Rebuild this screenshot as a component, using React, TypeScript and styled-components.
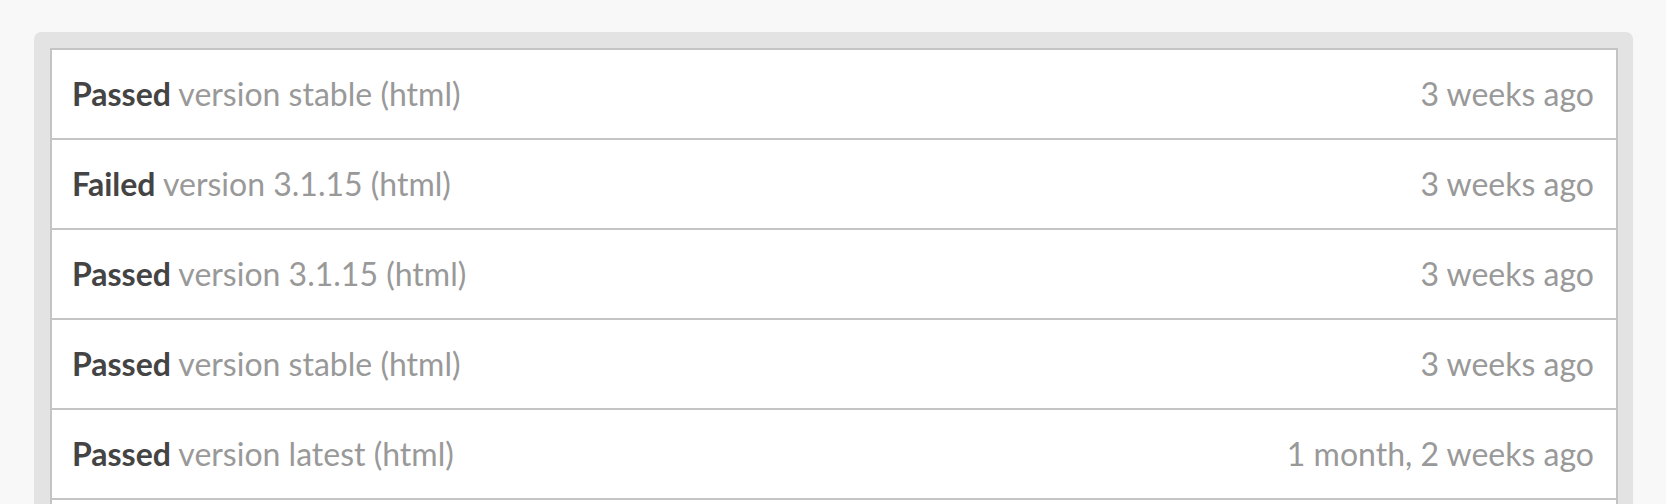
import React from "react";
import styled, { createGlobalStyle } from "styled-components";

const Global = createGlobalStyle`
  html, body { margin: 0; padding: 0; }
  body {
    background: #f8f8f8;
    font-family: Lato, "Open Sans", sans-serif;
  }
`;

const Page = styled.div`
  padding: 32px 33px 0 34px;
`;

const Panel = styled.section`
  background: #e3e3e3;
  border-radius: 7px;
  padding: 16px 15px 16px 16px;
`;

const List = styled.ul`
  list-style: none;
  margin: 0;
  padding: 0;
  background: #fff;
  border: 2px solid #c4c4c4;
  border-bottom: none;
`;

const Row = styled.li`
  display: flex;
  align-items: center;
  justify-content: space-between;
  height: 88px;
  padding: 0 22px 0 20px;
  border-bottom: 2px solid #c4c4c4;
  font-size: 32px;
  line-height: 1;
`;

const Label = styled.span`
  color: #999;
`;

const Status = styled.strong`
  color: #444;
  font-weight: 700;
`;

const When = styled.span`
  color: #999;
`;

const builds = [
  { status: "Passed", version: "stable", when: "3 weeks ago" },
  { status: "Failed", version: "3.1.15", when: "3 weeks ago" },
  { status: "Passed", version: "3.1.15", when: "3 weeks ago" },
  { status: "Passed", version: "stable", when: "3 weeks ago" },
  { status: "Passed", version: "latest", when: "1 month, 2 weeks ago" },
  { status: "Passed", version: "latest", when: "1 month, 2 weeks ago" },
];

export default function App() {
  return (
    <>
      <Global />
      <Page>
        <Panel>
          <List>
            {builds.map((b, i) => (
              <Row key={i}>
                <Label>
                  <Status>{b.status}</Status> version {b.version} (html)
                </Label>
                <When>{b.when}</When>
              </Row>
            ))}
          </List>
        </Panel>
      </Page>
    </>
  );
}
